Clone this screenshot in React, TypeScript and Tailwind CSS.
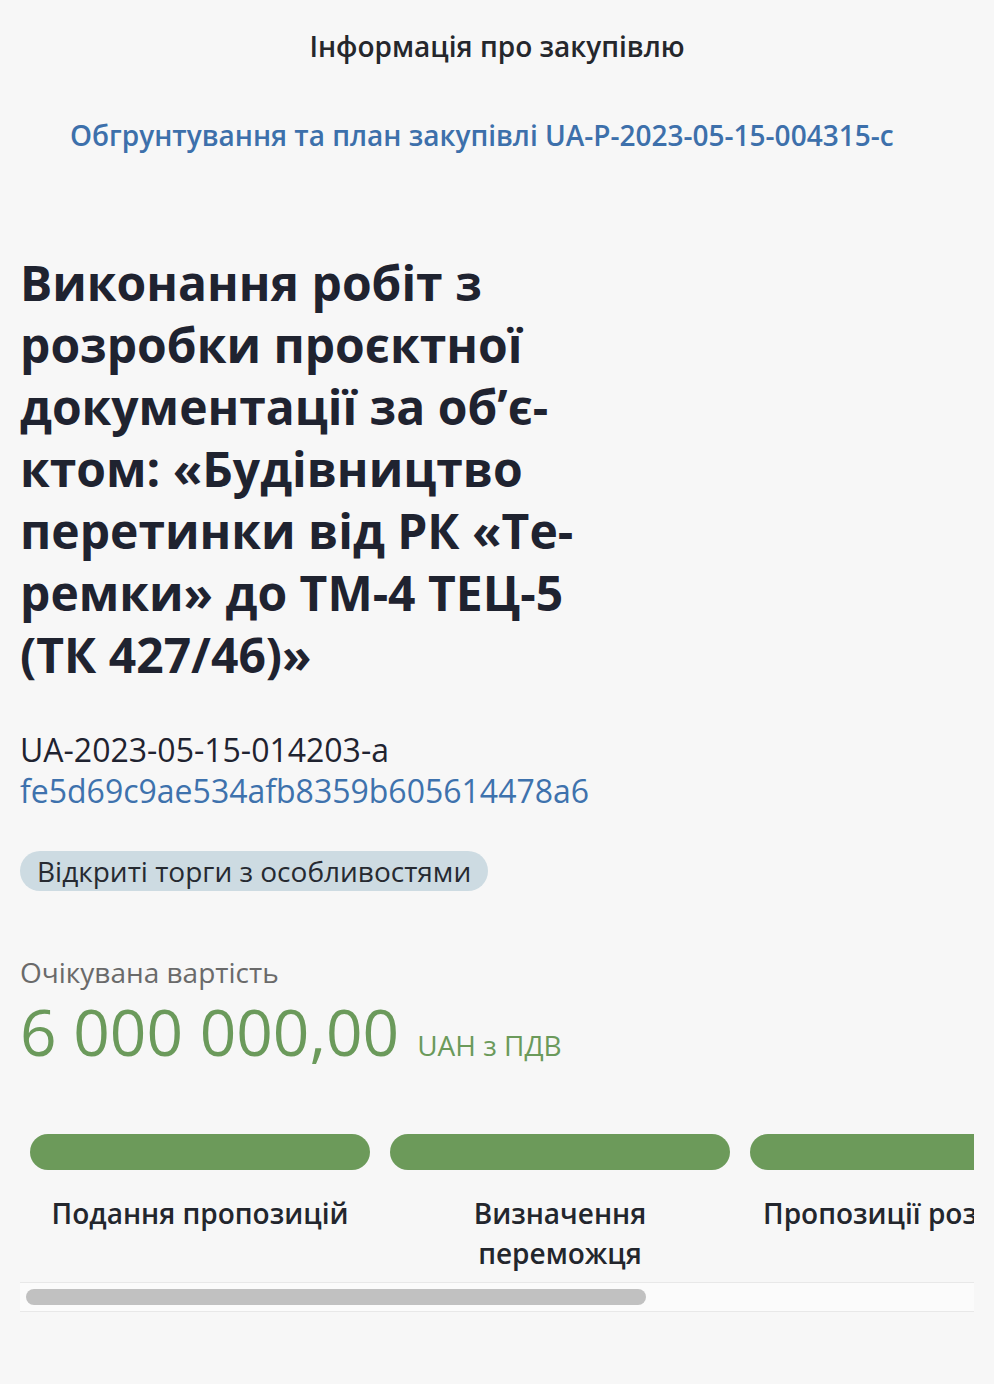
import React from "react";

const steps = [
  { label: "Подання пропозицій" },
  { label: "Визначення переможця" },
  { label: "Пропозиції розглянуто", nowrap: true },
  { label: "Завершена закупівля" },
];

function Stepper() {
  return (
    <div className="mx-[20px] mt-[60px]">
      <div className="overflow-hidden">
        <div className="flex">
          {steps.map((s) => (
            <div key={s.label} className="w-[360px] shrink-0 px-[10px]">
              <div className="h-[36px] rounded-full bg-[#6c9a5a]" />
              <div
                className={
                  s.nowrap
                    ? "mt-[23px] whitespace-nowrap px-[13px] text-left text-[28px] font-semibold leading-[40px] text-[#23262d]"
                    : "mt-[23px] px-[10px] text-center text-[28px] font-semibold leading-[40px] text-[#23262d]"
                }
              >
                {s.label}
              </div>
            </div>
          ))}
        </div>
      </div>
      {/* horizontal scrollbar */}
      <div className="mt-[9px] border-y border-[#e8e8e8] bg-[#fbfbfb] px-[6px] py-[6px]">
        <div className="h-[16px] w-[620px] rounded-full bg-[#c1c1c1]" />
      </div>
    </div>
  );
}

export default function App() {
  return (
    <div className="min-h-screen bg-[#f7f7f7] pb-[60px] font-['Open_Sans','Noto_Sans',sans-serif]">
      <header className="pt-[27px] text-center text-[28px] font-semibold leading-[38px] text-[#25272c]">
        Інформація про закупівлю
      </header>

      <a
        href="#"
        className="mt-[51px] block pl-[70px] text-[28px] font-semibold leading-[38px] text-[#3d70ab]"
      >
        Обгрунтування та план закупівлі UA-P-2023-05-15-004315-c
      </a>

      <main className="px-[20px]">
        <h1 className="mt-[98px] w-[590px] text-[48px] font-bold leading-[62px] text-[#1f2330]">
          Виконання робіт з розробки проєктної документації за об’є&shy;ктом:
          «Будівництво перетинки від РК «Те&shy;ремки» до ТМ-4 ТЕЦ-5 (ТК
          427/46)»
        </h1>

        <div className="mt-[43px] text-[32px] leading-[41px] text-[#1f2330]">
          UA-2023-05-15-014203-a
        </div>
        <a href="#" className="block text-[32px] leading-[41px] text-[#3e72ad]">
          fe5d69c9ae534afb8359b605614478a6
        </a>

        <div className="mt-[40px] inline-flex h-[40px] items-center rounded-full bg-[#cddbe2] px-[17px] text-[28px] text-[#262a31]">
          Відкриті торги з особливостями
        </div>

        <div className="mt-[63px] text-[28px] leading-[36px] text-[#6a6a6a]">
          Очікувана вартість
        </div>
        <div className="flex items-baseline gap-[18px] text-[#6b9a5b]">
          <span className="text-[64px] leading-[84px]">6 000 000,00</span>
          <span className="text-[28px]">UAH з ПДВ</span>
        </div>
      </main>

      <Stepper />
    </div>
  );
}
